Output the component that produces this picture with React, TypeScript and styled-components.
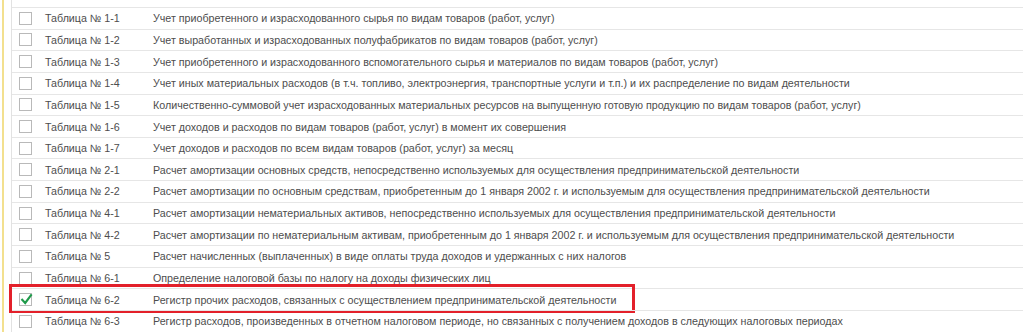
import React from "react";
import styled, { createGlobalStyle } from "styled-components";

const Global = createGlobalStyle`
  html, body { margin: 0; padding: 0; background: #ffffff; }
  body { font-family: Arial, "Liberation Sans", sans-serif; overflow: hidden; }
`;

const Page = styled.div`
  display: flex;
  width: 1023px;
  height: 332px;
  overflow: hidden;
  background: #fff;
`;

const Gutter = styled.div`
  width: 11px;
  flex: none;
  box-sizing: border-box;
  padding-left: 2px;
  display: flex;
`;

const YellowLine = styled.div`
  width: 2px;
  background: #f3e08e;
`;

const Table = styled.div`
  flex: 1;
  border-left: 1px solid #e2e2e2;
  padding-top: 7px;
  display: flex;
  flex-direction: column;
`;

const Row = styled.div<{ $marked?: boolean }>`
  position: relative;
  display: flex;
  align-items: center;
  height: 21.65px;
  flex: none;
  box-sizing: border-box;
  border-top: 1px solid #e6e6e6;
  font-size: 10.7px;
  color: #4d4d4d;
  white-space: nowrap;

  ${(p) =>
    p.$marked &&
    `
    &::after {
      content: "";
      position: absolute;
      left: -3px;
      top: -5px;
      width: 626px;
      height: 29px;
      box-sizing: border-box;
      border: 3px solid #e3202a;
      pointer-events: none;
    }
  `}
`;

const CheckCell = styled.div`
  width: 33px;
  flex: none;
  display: flex;
  align-items: center;
  padding-left: 7px;
  box-sizing: border-box;
`;

const Box = styled.div`
  width: 13px;
  height: 13px;
  box-sizing: border-box;
  border: 1px solid #b9b9b9;
  background: #fff;
  position: relative;
`;

const Name = styled.div`
  width: 108px;
  flex: none;
`;

const Desc = styled.div`
  flex: 1;
`;

const Check = () => (
  <svg width="13" height="13" viewBox="0 0 13 13" style={{ position: "absolute", left: 0, top: -1 }}>
    <path d="M2.2 6.8 L5.2 10 L11 2.2" fill="none" stroke="#1f9a4a" strokeWidth="2.1" strokeLinecap="square" />
  </svg>
);

const rows: [string, string, boolean?][] = [
  ["Таблица № 1-1", "Учет приобретенного и израсходованного сырья по видам товаров (работ, услуг)"],
  ["Таблица № 1-2", "Учет выработанных и израсходованных полуфабрикатов по видам товаров (работ, услуг)"],
  ["Таблица № 1-3", "Учет приобретенного и израсходованного вспомогательного сырья и материалов по видам товаров (работ, услуг)"],
  ["Таблица № 1-4", "Учет иных материальных расходов (в т.ч. топливо, электроэнергия, транспортные услуги и т.п.) и их распределение по видам деятельности"],
  ["Таблица № 1-5", "Количественно-суммовой учет израсходованных материальных ресурсов на выпущенную готовую продукцию по видам товаров (работ, услуг)"],
  ["Таблица № 1-6", "Учет доходов и расходов по видам товаров (работ, услуг) в момент их совершения"],
  ["Таблица № 1-7", "Учет доходов и расходов по всем видам товаров (работ, услуг) за месяц"],
  ["Таблица № 2-1", "Расчет амортизации основных средств, непосредственно используемых для осуществления предпринимательской деятельности"],
  ["Таблица № 2-2", "Расчет амортизации по основным средствам, приобретенным до 1 января 2002 г. и используемым для осуществления предпринимательской деятельности"],
  ["Таблица № 4-1", "Расчет амортизации нематериальных активов, непосредственно используемых для осуществления предпринимательской деятельности"],
  ["Таблица № 4-2", "Расчет амортизации по нематериальным активам, приобретенным до 1 января 2002 г. и используемым для осуществления предпринимательской деятельности"],
  ["Таблица № 5", "Расчет начисленных (выплаченных) в виде оплаты труда доходов и удержанных с них налогов"],
  ["Таблица № 6-1", "Определение налоговой базы по налогу на доходы физических лиц"],
  ["Таблица № 6-2", "Регистр прочих расходов, связанных с осуществлением предпринимательской деятельности", true],
  ["Таблица № 6-3", "Регистр расходов, произведенных в отчетном налоговом периоде, но связанных с получением доходов в следующих налоговых периодах"],
];

export default function App() {
  return (
    <>
      <Global />
      <Page>
        <Gutter>
          <YellowLine />
        </Gutter>
        <Table>
          {rows.map(([n, d, m]) => (
            <Row key={n} $marked={!!m}>
              <CheckCell>
                <Box>{m && <Check />}</Box>
              </CheckCell>
              <Name>{n}</Name>
              <Desc>{d}</Desc>
            </Row>
          ))}
        </Table>
      </Page>
    </>
  );
}
